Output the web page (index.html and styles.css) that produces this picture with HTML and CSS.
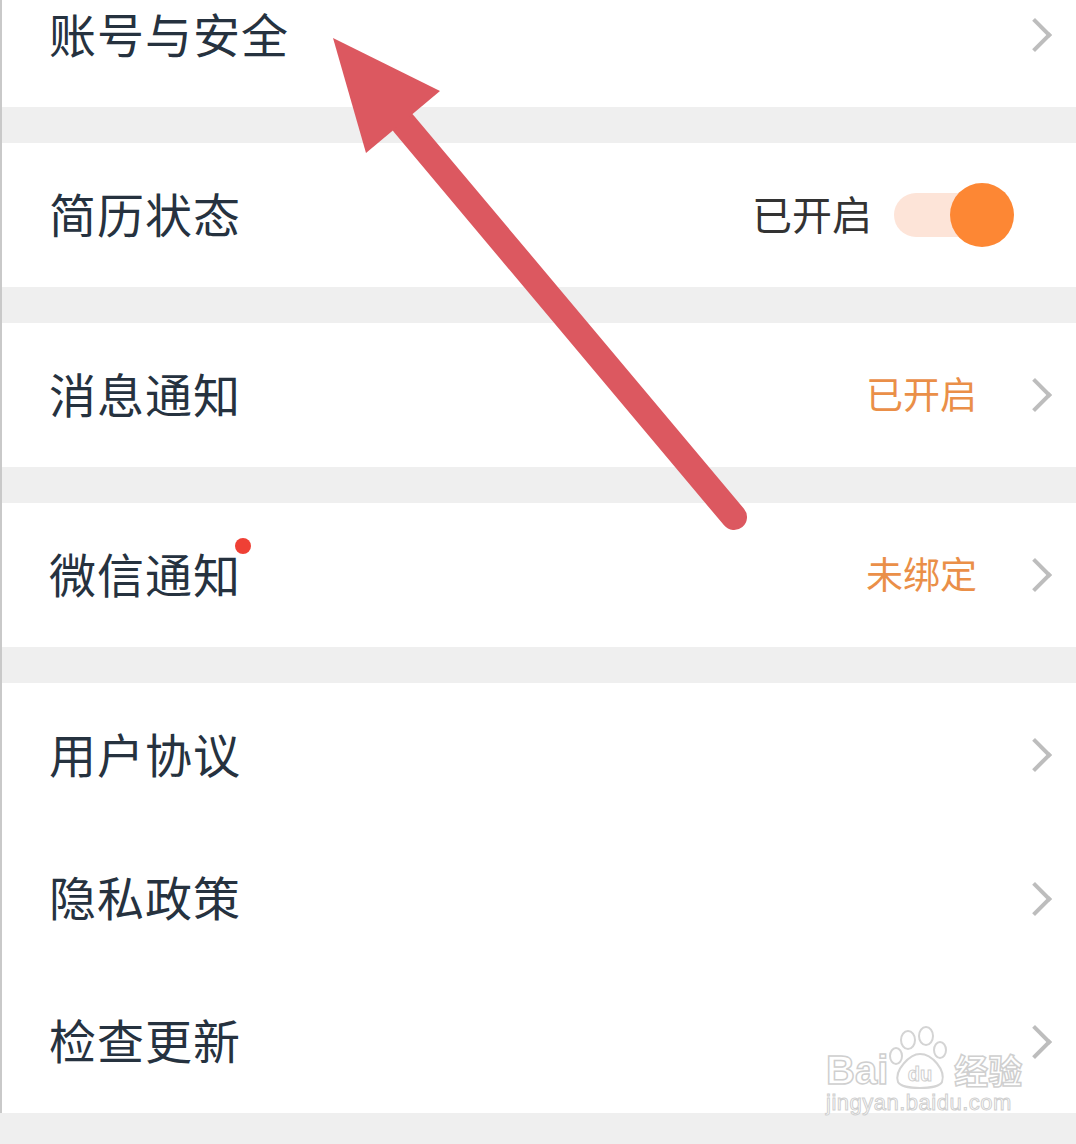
FILE: index.html
```html
<!DOCTYPE html>
<html lang="zh-CN">
<head>
    <meta charset="UTF-8">
    <meta name="viewport" content="width=device-width, initial-scale=1.0">
    <title>设置</title>
    <link rel="stylesheet" href="styles.css">
</head>
<body>
    <div class="page">
        <div class="group">
            <div class="row">
                <span class="label">账号与安全</span>
                <span class="chevron"></span>
            </div>
        </div>
        <div class="group">
            <div class="row">
                <span class="label">简历状态</span>
                <span class="state">已开启</span>
                <span class="toggle"><span class="knob"></span></span>
            </div>
        </div>
        <div class="group">
            <div class="row">
                <span class="label">消息通知</span>
                <span class="value">已开启</span>
                <span class="chevron"></span>
            </div>
        </div>
        <div class="group">
            <div class="row">
                <span class="label">微信通知<i class="dot"></i></span>
                <span class="value">未绑定</span>
                <span class="chevron"></span>
            </div>
        </div>
        <div class="group">
            <div class="row">
                <span class="label">用户协议</span>
                <span class="chevron"></span>
            </div>
            <div class="row">
                <span class="label">隐私政策</span>
                <span class="chevron"></span>
            </div>
            <div class="row">
                <span class="label">检查更新</span>
                <span class="chevron"></span>
            </div>
        </div>
    </div>

    <!-- annotation arrow -->
    <svg class="arrow" width="1076" height="1144" viewBox="0 0 1076 1144">
        <line x1="734" y1="517" x2="404" y2="124" stroke="#dc5860" stroke-width="26" stroke-linecap="round"/>
        <polygon points="333,38 440,91 366,153" fill="#dc5860"/>
    </svg>

    <div class="watermark">
        <div class="wm-top">
            <span class="wm-bai">Bai</span>
            <span class="wm-paw">
                <svg width="66" height="66" viewBox="0 0 66 66">
                    <g fill="#fff" stroke="#d4d4d4" stroke-width="2">
                        <ellipse cx="20" cy="14" rx="7" ry="9"/>
                        <ellipse cx="38" cy="10" rx="7" ry="9"/>
                        <ellipse cx="52" cy="24" rx="6" ry="8"/>
                        <ellipse cx="8" cy="30" rx="6" ry="8"/>
                        <path d="M10 56 C6 44 22 28 32 28 C44 28 58 44 54 56 C50 64 14 64 10 56 Z"/>
                    </g>
                    <text x="32" y="55" text-anchor="middle" class="wm-du">du</text>
                </svg>
            </span>
            <span class="wm-jy">经验</span>
        </div>
        <div class="wm-url">jingyan.baidu.com</div>
    </div>
</body>
</html>
```

FILE: styles.css
```css
body {
    margin: 0;
    font-family: "Noto Sans CJK SC", "Noto Sans", sans-serif;
    background: #efefef;
    position: relative;
    height: 1144px;
    overflow: hidden;
}
.page {
    margin-top: -37px;
    border-left: 2px solid #c9c9c9;
}
.group {
    background: #ffffff;
    margin-bottom: 36px;
}
.row {
    height: 144px;
    display: flex;
    align-items: center;
    padding: 0 21px 0 47px;
}
.row + .row {
    height: 143px;
}
.label {
    font-size: 47px;
    color: #26323f;
    letter-spacing: 1px;
    position: relative;
    flex: 1;
    margin-bottom: 6px;
}
.dot {
    position: absolute;
    left: 186px;
    top: 0px;
    width: 16px;
    height: 16px;
    border-radius: 50%;
    background: #ef4035;
}
.value {
    font-size: 37px;
    color: #ea8f48;
    margin-right: 56px;
    margin-bottom: 4px;
}
.state {
    font-size: 40px;
    color: #333333;
    margin-right: 22px;
    margin-bottom: 4px;
}
.chevron {
    width: 22px;
    height: 36px;
    display: inline-block;
    position: relative;
}
.chevron::before {
    content: "";
    position: absolute;
    left: -10px;
    top: 6px;
    width: 20px;
    height: 20px;
    border-top: 4px solid #bdbdbd;
    border-right: 4px solid #bdbdbd;
    transform: rotate(45deg);
}
.toggle {
    width: 100px;
    height: 44px;
    border-radius: 22px;
    background: #fde4d8;
    position: relative;
    margin-right: 61px;
}
.knob {
    position: absolute;
    right: -20px;
    top: -10px;
    width: 64px;
    height: 64px;
    border-radius: 50%;
    background: #fd8734;
}
.arrow {
    position: absolute;
    left: 0;
    top: 0;
}
.watermark {
    position: absolute;
    left: 826px;
    top: 1024px;
    color: #ffffff;
    font-family: "Liberation Sans", Arial, sans-serif;
}
.wm-top {
    display: flex;
    align-items: flex-end;
    height: 68px;
}
.wm-bai {
    font-size: 40px;
    font-weight: bold;
    -webkit-text-stroke: 1.5px #cfcfcf;
    line-height: 40px;
    margin-bottom: 2px;
}
.wm-paw {
    height: 66px;
}
.wm-du {
    font-size: 20px;
    font-weight: bold;
    fill: #fff;
    stroke: #cfcfcf;
    stroke-width: 1;
}
.wm-jy {
    font-family: "Noto Sans CJK SC", sans-serif;
    font-size: 34px;
    font-weight: bold;
    -webkit-text-stroke: 1.5px #cfcfcf;
    line-height: 40px;
    margin-bottom: 2px;
}
.wm-url {
    font-size: 22px;
    -webkit-text-stroke: 1px #cfcfcf;
    letter-spacing: 0.5px;
    margin-top: -2px;
}
```
